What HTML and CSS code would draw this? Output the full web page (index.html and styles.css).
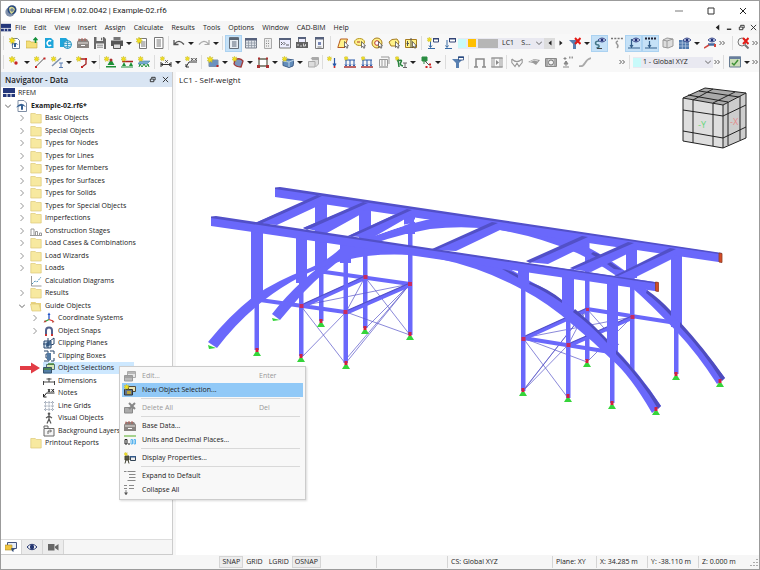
FILE: index.html
```html
<!DOCTYPE html>
<html lang="en">
<head>
    <meta charset="UTF-8">
    <meta name="viewport" content="width=device-width, initial-scale=1.0">
    <title>Dlubal RFEM | 6.02.0042 | Example-02.rf6</title>
    <link rel="stylesheet" href="styles.css">
</head>
<body>

<!-- Icon library -->
<svg class="icon-library" aria-hidden="true">
    <symbol id="star" viewBox="0 0 12 12"><path d="M3 0l.8 2L6 1.2 4.8 3 6.500 3.800 4.700 4.500 5.200 6.500 3.400 5.300 2 6.800 1.800 4.800 0 4.800 1.300 3.400 0 1.600 2.200 2z" fill="#f2df1d" stroke="#b9ad1c" stroke-width=".4"/></symbol>
    <symbol id="doc" viewBox="0 0 12 12"><path d="M1.500 .500h8.500v11h-8.500z" fill="#fff" stroke="#777"/><path d="M3.500 3h4.500M3.500 5h4.500M3.500 7h4.500M3.500 9h4.500" stroke="#777"/></symbol>
    <symbol id="new-doc" viewBox="0 0 12 12"><path d="M3.500 1.500h7v10h-7z" fill="#fff" stroke="#777"/><path d="M5 5h4.500M5 7h4.500M5 9h4.500" stroke="#777"/><use href="#star"/></symbol>
    <symbol id="new-model" viewBox="0 0 12 12"><path d="M3.500 1.500h5l2 2v8h-7z" fill="#fff" stroke="#6b7d95"/><path d="M2 8.500q3.500-5 7.500-.5l-2.500-1v3H5V7z" fill="#2f5d94"/><use href="#star"/></symbol>
    <symbol id="model" viewBox="0 0 12 12"><path d="M2 .500h6l2.500 2.500v8.500h-8.500z" fill="#fff" stroke="#7f8ea4"/><path d="M0 7.500q5-7 10-.5l-3-1.300v4h-2v-4z" fill="#345f91"/></symbol>
    <symbol id="open" viewBox="0 0 12 12"><path d="M0 4h4l1 1h6v6H0z" fill="#f4df7a" stroke="#c5a83c" stroke-width=".6"/><path d="M9.500 6V1.500M7.500 3.200l2-2.200 2 2.200" stroke="#12903a" stroke-width="1.500" fill="none"/></symbol>
    <symbol id="center" viewBox="0 0 12 12"><path d="M2 1h6l2.500 2.500v7.500H2z" fill="#1ea5da"/><path d="M8.200 4.200a2.500 2.500 0 1 0 0 4" fill="none" stroke="#fff" stroke-width="1.500"/></symbol>
    <symbol id="cloud" viewBox="0 0 12 12"><path d="M0 1h6l2 2v7H0z" fill="#1ea5da"/><circle cx="7.500" cy="7.500" r="4" fill="#d9f2fb" stroke="#188dbd"/><path d="M3.500 7.500h8M7.500 3.500v8M5 5q2.500 1.500 5 0M5 10q2.500-1.500 5 0" stroke="#188dbd" stroke-width=".7" fill="none"/></symbol>
    <symbol id="base" viewBox="0 0 12 12"><path d="M0 4.500h12V11H0zM2 2h8l2 3H0z" fill="#8a8582"/><path d="M1 6h10" stroke="#e8e3df"/><path d="M2 1.500v2.500M5 1v3M8 1v3" stroke="#b35d55" stroke-width="1"/><path d="M4 8.500h4" stroke="#fff"/></symbol>
    <symbol id="save" viewBox="0 0 12 12"><path d="M0 0h10l2 2v10H0z" fill="#696969"/><path d="M2.500 0h6.500v4h-6.500zM2 6.500h8V12H2z" fill="#f4f4f4"/><path d="M3 8.200h6M3 10.200h6" stroke="#888"/><path d="M7 .700h1.200v2.500H7z" fill="#696969"/></symbol>
    <symbol id="print" viewBox="0 0 12 12"><path d="M2.500 0h7v3h-7z" fill="#777"/><path d="M0 3.500h12v5.500H0z" fill="#555"/><path d="M2.500 7h7v4.500h-7z" fill="#ddd" stroke="#555"/></symbol>
    <symbol id="undo" viewBox="0 0 12 12"><path d="M1 3v4.500h4.500M1.500 7q4.500-5.500 9.500.5" fill="none" stroke="#555" stroke-width="1.300"/></symbol>
    <symbol id="redo" viewBox="0 0 12 12"><path d="M11 3v4.500H6.500M10.500 7Q6 1.500 1 7.500" fill="none" stroke="#aaa" stroke-width="1.200"/></symbol>
    <symbol id="navigator" viewBox="0 0 12 12"><path d="M1.500 .500h9v11h-9z" fill="#e8edf3" stroke="#666f7b"/><path d="M1 1h10v2H1z" fill="#5b6675"/><path d="M4 5h4.500M4 7h4.500M4 9h4.500" stroke="#586577"/></symbol>
    <symbol id="table" viewBox="0 0 12 12"><path d="M.5 1.500h11v9.500H.5z" fill="#dfe3e9" stroke="#777e8b"/><path d="M0 1h12v2.500H0z" fill="#56617c"/><path d="M0 6h12M0 8.500h12M3.500 3v8M6.500 3v8M9.500 3v8" stroke="#8b93a0" stroke-width=".7"/></symbol>
    <symbol id="list-grey" viewBox="0 0 12 12"><path d="M2.500 1.500h7v10h-7z" fill="#eee" stroke="#aaa"/><path d="M4 4h4M4 6.500h4M4 9h4" stroke="#888" stroke-dasharray="1 1"/></symbol>
    <symbol id="console" viewBox="0 0 12 12"><path d="M.5 1.500h11v9.500H.5z" fill="#eef" stroke="#777"/><path d="M0 1h12v2H0z" fill="#56617c"/><path d="M2 5l1.500 1.500L2 8M4.500 5l1.500 1.500L4.500 8M7 8h3" stroke="#333" fill="none" stroke-width=".8"/></symbol>
    <symbol id="script" viewBox="0 0 12 12"><path d="M2.500 .500h7v5h-7z" fill="#eef" stroke="#777"/><path d="M2 0h8v2H2z" fill="#56617c"/><path d="M0 5h12v6H0z" fill="#626262"/><path d="M1.500 7l1 1-1 1M4 9h2M7.500 6.500v2.800M7.500 9h2v-2" stroke="#fff" fill="none" stroke-width=".7"/></symbol>
    <symbol id="panel" viewBox="0 0 12 12"><path d="M2.500 .500h8v11h-8z" fill="#f4f6fa" stroke="#777"/><path d="M2 0h9v2.500H2z" fill="#56617c"/><path d="M5 5h3v3H5z" fill="#7a89b5"/><path d="M4.500 10h4" stroke="#777"/></symbol>
    <symbol id="cursor" viewBox="0 0 12 12"><path d="M7.500 4.500v6l1.300-1.200 1 2 1-.5-.9-1.900h1.600z" fill="#fff" stroke="#222" stroke-width=".6"/></symbol>
    <symbol id="sel-rhomb" viewBox="0 0 12 12"><path d="M3.500 2h7l-3 8.500H.8z" fill="#fff28a" stroke="#b65a20"/><use href="#cursor"/></symbol>
    <symbol id="sel-ellipse" viewBox="0 0 12 12"><ellipse cx="5.500" cy="5" rx="5" ry="3.500" fill="#fff28a" stroke="#b69520"/><path d="M3 5h3" stroke="#a33"/><use href="#cursor"/></symbol>
    <symbol id="sel-ring" viewBox="0 0 12 12"><circle cx="6" cy="6" r="5" fill="#fff28a" stroke="#a67c20"/><circle cx="6" cy="6" r="2.300" fill="#fff" stroke="#b33"/><use href="#cursor"/></symbol>
    <symbol id="sel-poly" viewBox="0 0 12 12"><path d="M1 5l3-2.500 5-.5 2 3-1.500 4H3z" fill="#fff28a" stroke="#a67c20"/><use href="#cursor"/></symbol>
    <symbol id="sel-split" viewBox="0 0 12 12"><path d="M.5 2.500h11v8H.5z" fill="#fff28a" stroke="#a67c20"/><path d="M6 1v10M2.500 4v5M1.500 6.500h2.500" stroke="#555"/><use href="#cursor"/></symbol>
    <symbol id="load-new" viewBox="0 0 12 12"><path d="M1 11.500h7M3.500 4v6M2 8.500l1.500 2 1.500-2" stroke="#376aa5" fill="none"/><path d="M6.500 1.500h5v3.500h-5z" fill="#fff" stroke="#347"/><path d="M6 1h6v1.500H6z" fill="#347"/><use href="#star" width="9" height="9"/></symbol>
    <symbol id="load-case" viewBox="0 0 12 12"><path d="M1 11.500h7M3 3v7M1.500 8.500l1.500 2 1.500-2" stroke="#376aa5" fill="none"/><path d="M5.500 1.500h6v3.500h-6z" fill="#fff" stroke="#347"/><path d="M5 1h7v1.500H5z" fill="#347"/></symbol>
    <symbol id="filter" viewBox="0 0 12 12"><path d="M0 3h11L7 7v5H4V7z" fill="#5880b1"/></symbol>
    <symbol id="red-x" viewBox="0 0 12 12"><path d="M6 1l5.500 6M11.500 1L6 7" stroke="#e31b16" stroke-width="2"/></symbol>
    <symbol id="filter-x" viewBox="0 0 12 12"><use href="#filter"/><use href="#red-x"/></symbol>
    <symbol id="filter-win" viewBox="0 0 12 12"><use href="#filter"/><path d="M6.500 1h5v3h-5z" fill="#fff" stroke="#294a80" stroke-width=".8"/><path d="M6 .500h6V2H6z" fill="#294a80"/></symbol>
    <symbol id="eye" viewBox="0 0 12 12"><path d="M4 3q4-4 8 0-4 4-8 0z" fill="#dfe8fb" stroke="#1d2d75" stroke-width=".8"/><circle cx="8" cy="3" r="1.500" fill="#1d2d75"/></symbol>
    <symbol id="support-eye" viewBox="0 0 12 12"><path d="M5.500 4q-4 0-4 2t3 2q2 2-2 3" stroke="#478" fill="none" stroke-width="1.500"/><path d="M3 11.500h5" stroke="#444"/><use href="#eye"/></symbol>
    <symbol id="values-grey" viewBox="0 0 12 12"><path d="M0 1.500h12" stroke="#777" stroke-width="1.500" stroke-dasharray="2 1.300"/><path d="M7 4q-3 1-1 3t0 4" stroke="#999" fill="none" stroke-width="1.500"/></symbol>
    <symbol id="load-eye" viewBox="0 0 12 12"><path d="M0 11h12M3.500 2v8M2 8l1.500 2L5 8" stroke="#35608b" fill="none" stroke-width="1.200"/><use href="#eye"/></symbol>
    <symbol id="load-values" viewBox="0 0 12 12"><path d="M0 11h12M4.500 4v6M3 8l1.500 2L6 8" stroke="#35608b" fill="none" stroke-width="1.200"/><path d="M0 1.500h12" stroke="#223" stroke-width="2" stroke-dasharray="2 1"/></symbol>
    <symbol id="cube-grey" viewBox="0 0 12 12"><path d="M1 3l4-2 6 1v7l-5 2-5-1z" fill="#ddd" stroke="#999"/><path d="M5 4v7M1 3l4 1 6-2" fill="none" stroke="#999"/></symbol>
    <symbol id="grid-eye" viewBox="0 0 12 12"><path d="M0 3h10v9H0z" fill="#4e79ae"/><path d="M0 6h10M0 9h10M3.300 3v9M6.600 3v9" stroke="#b9cce4" stroke-width=".7"/><use href="#eye"/></symbol>
    <symbol id="beam-eye" viewBox="0 0 12 12"><path d="M4 7.500h7" stroke="#456ca4" stroke-width="2.500"/><path d="M0 11l5-3" stroke="#d2453d" stroke-width="1.500"/><path d="M10 7h2v3h-2z" fill="#d2453d"/><use href="#eye"/></symbol>
    <symbol id="find-x" viewBox="0 0 12 12"><circle cx="5" cy="5" r="4" fill="#f5f5f5" stroke="#777"/><path d="M8 8l3.500 3.500" stroke="#777" stroke-width="2"/><use href="#red-x"/></symbol>
    <symbol id="node" viewBox="0 0 12 12"><use href="#star"/><circle cx="7" cy="7" r="1.700" fill="#c82424"/></symbol>
    <symbol id="line" viewBox="0 0 12 12"><path d="M2 10.500L10.500 2" stroke="#555"/><path d="M1 10h2v2H1zM9.500 1.500h2v2h-2z" fill="#c82424"/><use href="#star" width="10" height="10"/></symbol>
    <symbol id="member" viewBox="0 0 12 12"><path d="M1 10L10 2" stroke="#7e92ae" stroke-width="1.500"/><path d="M8 7h4M10 7v4M8 11.500h4" stroke="#5a7eb4"/><use href="#star" width="10" height="10"/></symbol>
    <symbol id="polyline" viewBox="0 0 12 12"><path d="M3 3h7v5l-4 3" fill="none" stroke="#a02020" stroke-width="1.300"/><path d="M5 10h2v2H5zM9 2h2v2H9z" fill="#c82424"/><use href="#star" width="10" height="10"/></symbol>
    <symbol id="nodal-support" viewBox="0 0 12 12"><path d="M7 3l3.500 6h-7zM2 10h10v1.500H2z" fill="#1e9138"/><circle cx="7" cy="4" r="1.500" fill="#a33"/><use href="#star" width="10" height="10"/></symbol>
    <symbol id="line-support" viewBox="0 0 12 12"><path d="M1 5.500h11" stroke="#a22" stroke-width="1.500"/><path d="M3 6l2 4H1zM10 6l2 4H8z" fill="#1e9138"/><path d="M0 11h12" stroke="#1e9138"/><use href="#star" width="10" height="10"/></symbol>
    <symbol id="surface-support" viewBox="0 0 12 12"><path d="M2 5h10L9 8H0z" fill="#77acd0" stroke="#4485a8" stroke-width=".6"/><path d="M1 11l1-3 2 3 2-3 2 3 2-3 1 3" fill="none" stroke="#1e9138"/><use href="#star" width="10" height="10"/></symbol>
    <symbol id="dimension" viewBox="0 0 12 12"><path d="M1 6v5M11 6v5M1 8.500h10M3 7.500L1 8.500l2 1M9 7.500l2 1-2 1" stroke="#333" fill="none"/><path d="M5 4l3 3M8 4L5 7" stroke="#333" stroke-width=".7"/><use href="#star" width="9" height="9"/></symbol>
    <symbol id="note" viewBox="0 0 12 12"><path d="M1 11l3-5h8M1 11v-3M1 11h3" stroke="#333" fill="none"/><path d="M6 2l2.500 3M8.500 2L6 5M9.500 2L12 5M12 2L9.500 5" stroke="#333" stroke-width=".8"/><use href="#star" width="9" height="9"/></symbol>
    <symbol id="surface" viewBox="0 0 12 12"><path d="M2 4h9v6.500H2z" fill="#6b91c0" stroke="#7b8fae"/><path d="M9.500 9h2v2h-2z" fill="#b22"/><use href="#star"/></symbol>
    <symbol id="surface-round" viewBox="0 0 12 12"><path d="M3 4q5-3 8 1l-2 6q-5 0-7-3z" fill="#7b93bc" stroke="#a03939" stroke-width="1.300"/><use href="#star" width="10" height="10"/></symbol>
    <symbol id="opening" viewBox="0 0 12 12"><path d="M2 3h8v7H2z" fill="#fff" stroke="#665" stroke-width="1.300"/><path d="M0 9h3v3H0zM9 1.500h2v2H9zM9 9h3v3H9zM1 1.500h2v2H1z" fill="#a33"/></symbol>
    <symbol id="solid" viewBox="0 0 12 12"><path d="M1 5l4-2 7 1-1 6-4 1.500-6-2z" fill="#628dbb" stroke="#405f89"/><path d="M1 5l6 1 5-2M7 6v5" fill="none" stroke="#bed4e7"/><use href="#star" width="10" height="10"/></symbol>
    <symbol id="solid-grey" viewBox="0 0 12 12"><path d="M1.500 5.500h6.500v5.500H1.500zM4 3l1-1.500h6.500v6.500l-3 3" fill="#ddd" stroke="#aaa"/><path d="M5 2h7v2H5z" fill="#aaa"/></symbol>
    <symbol id="load-node" viewBox="0 0 12 12"><path d="M7.500 2v7M6 7.500L7.500 10 9 7.500" stroke="#2958a8" stroke-width="1.200" fill="none"/><circle cx="7.500" cy="11" r="1" fill="#c22"/><use href="#star" width="9" height="9"/></symbol>
    <symbol id="load-line" viewBox="0 0 12 12"><path d="M1 4h10M2 4v6M6 4v6M10 4v6M1 8.500l1 1.500 1-1.500M5 8.500L6 10l1-1.500M9 8.500l1 1.500 1-1.500" stroke="#2958a8" fill="none"/><path d="M0 11h12" stroke="#a33" stroke-width="1.500"/><use href="#star" width="8" height="8"/></symbol>
    <symbol id="load-grey" viewBox="0 0 12 12"><path d="M1.500 10V3.500h8V10M4 3v7M7 3v7M3 1h8v7" stroke="#999" fill="none"/><path d="M1 11h9" stroke="#777"/></symbol>
    <symbol id="spring" viewBox="0 0 12 12"><path d="M2 5q6-2 4 1t2 4M3 3l1 8" stroke="#27823d" fill="none" stroke-width="1.500"/><path d="M8 7h4M10 7v4M8 11.500h4" stroke="#666"/><use href="#star" width="8" height="8"/></symbol>
    <symbol id="result-pts" viewBox="0 0 12 12"><path d="M2 1h5v4H2zM4 5v3" fill="#2b8d42" stroke="#2b8d42"/><path d="M5 5l4 4" stroke="#555"/><path d="M9 7.500h2v2H9zM5.500 10h2v2h-2zM9.500 10.500h2v1.500h-2z" fill="#c22"/></symbol>
    <symbol id="frame-grey" viewBox="0 0 12 12"><path d="M2 11V3h8v8M0 11h4M8 11h4" fill="none" stroke="#888" stroke-width="1.500"/></symbol>
    <symbol id="frame-load" viewBox="0 0 12 12"><path d="M1 2h10v9H1zM0 2h12M0 11h12M3 2v9M9 2v9" fill="none" stroke="#999"/><path d="M5 4l3 2.500L5 9z" fill="#888"/></symbol>
    <symbol id="deform" viewBox="0 0 12 12"><path d="M.8 3v3.500L4 10.500 6 7l2 3.500 3.200-4V3M.8 3q5 5 10.400 0" fill="none" stroke="#999" stroke-width="1.100"/></symbol>
    <symbol id="contour" viewBox="0 0 12 12"><path d="M0 6l6-3 6 1-4 5-3-2z" fill="#999"/><path d="M2 6l4-2 4 1" stroke="#ddd" fill="none"/></symbol>
    <symbol id="section" viewBox="0 0 12 12"><path d="M.5 2.500h11v8H.5z" fill="#ccc" stroke="#888"/><circle cx="6" cy="6.500" r="2.500" fill="#f5f5f5" stroke="#777"/><path d="M2 3v7M10 3v7" stroke="#888"/></symbol>
    <symbol id="reaction" viewBox="0 0 12 12"><path d="M4 10V5M2 8l2-3 2 3zM1 11h6M3 1v3M1.500 2.500h3" stroke="#888" fill="#888"/><path d="M7 1.500h5" stroke="#999" stroke-width="2" stroke-dasharray="1.500 1"/></symbol>
    <symbol id="diagonal" viewBox="0 0 12 12"><path d="M0 10q4 1 6-3t6-5" fill="none" stroke="#aaa" stroke-width="1.800"/></symbol>
    <symbol id="plugin" viewBox="0 0 12 12"><path d="M.5 1h11v10H.5z" fill="#ccdeba" stroke="#667b91"/><path d="M0 .500h12V3H0z" fill="#687e9d"/><path d="M3 7l2 2 4-5" fill="none" stroke="#3e9136" stroke-width="1.500"/></symbol>

    <symbol id="app" viewBox="0 0 12 12"><circle cx="5" cy="7" r="4.700" fill="#8192ad"/><circle cx="7" cy="4.800" r="4.500" fill="#28487d"/><path d="M4 3q3-3 6 1-1 4-4 5-2-3-2-6z" fill="#d9d990"/><path d="M5 5h4M7 3v4" stroke="#526a94"/></symbol>
    <symbol id="rfem" viewBox="0 0 12 12"><path d="M0 1h12v9H0z" fill="#24377b"/><path d="M0 6.500h12M4 6.500V10M8 6.500V10" stroke="#fff" stroke-width=".9"/></symbol>
    <symbol id="folder" viewBox="0 0 12 12"><path d="M.8 1.500h4.500l1 1H11.200v8.500H.8z" fill="#f7e9a0" stroke="#dcc879" stroke-width=".7"/></symbol>
    <symbol id="folder-open" viewBox="0 0 12 12"><path d="M.8 2h4.500l1 1H11v8H2z" fill="#e8d27f"/><path d="M.5 4h8.500l2 7H2z" fill="#f7e9a0" stroke="#dcc879" stroke-width=".7"/></symbol>
    <symbol id="stages" viewBox="0 0 12 12"><path d="M1 10.500V4h3v6.500M5.500 10.500V6.500h2v4M9.500 10.500V8h2v2.500M0 10.500h12" fill="none" stroke="#999"/></symbol>
    <symbol id="chart" viewBox="0 0 12 12"><path d="M1.500 1v10h10" fill="none" stroke="#999"/><path d="M2 9l3-3 2 1 4-5" fill="none" stroke="#4b8fb5" stroke-dasharray="2 1"/></symbol>
    <symbol id="axes" viewBox="0 0 12 12"><path d="M6 7V2" stroke="#2454c5" stroke-width="1.300"/><path d="M4.500 3L6 .500 7.500 3z" fill="#2454c5"/><path d="M6 7.500L2 9.500" stroke="#299b35" stroke-width="1.300"/><path d="M6 7.500l4 1.500" stroke="#d33" stroke-width="1.300"/><path d="M.5 10.500L2 8l1.500 2zM9.500 8l2 2-2.500.8z" fill="#b43"/></symbol>
    <symbol id="magnet" viewBox="0 0 12 12"><path d="M3 10V5.500a3 3 0 0 1 6 0V10" fill="none" stroke="#52618d" stroke-width="2"/><path d="M2 9h2v2H2zM8 9h2v2H8z" fill="#c33"/></symbol>
    <symbol id="clip-plane" viewBox="0 0 12 12"><path d="M1 4h7v7H1z" fill="#cfe0ee" stroke="#26446b"/><path d="M3 6l5-3v5l-5 2z" fill="#456990"/><path d="M5 1v10M7 4l4-3M8 8l3-1M11 1v6M0 7h3" stroke="#26446b" fill="none"/></symbol>
    <symbol id="clip-box" viewBox="0 0 12 12"><path d="M1 1h4v3H3v4h3v3H1M7 1h4v3M8 11h3V8" fill="none" stroke="#26446b"/><path d="M4 3h4v7H4z" fill="#537aa3"/></symbol>
    <symbol id="selection" viewBox="0 0 12 12"><path d="M3.500 2.500h8v5h-8z" fill="#d7e8b5" stroke="#53707b"/><path d="M.5 5.500h8V11h-8z" fill="#517da5" stroke="#395269"/><path d="M5 2h6M1 7h7" stroke="#4c8b3a" stroke-width="1.500"/></symbol>
    <symbol id="selection-grey" viewBox="0 0 12 12"><path d="M3.500 1.500h8v6h-8z" fill="#e6e6e6" stroke="#aaa"/><path d="M.5 5.500h8V11h-8z" fill="#bbb" stroke="#999"/><path d="M4 3h7M1 7h7" stroke="#888"/></symbol>
    <symbol id="selection-new" viewBox="0 0 12 12"><path d="M4.500 2.500h7v5h-7z" fill="#e7e3b5" stroke="#534b3b"/><path d="M.5 5.500h8V11h-8z" fill="#63728a" stroke="#333"/><path d="M3 7h4v3H3z" fill="#b9a43b"/><use href="#star" width="10" height="10"/></symbol>
    <symbol id="selection-del" viewBox="0 0 12 12"><path d="M.5 5.500h8V11h-8z" fill="#aaa" stroke="#888"/><path d="M5 1l6 6M11 1L5 7" stroke="#888" stroke-width="2"/></symbol>
    <symbol id="dims" viewBox="0 0 12 12"><path d="M.5 6v4M6 3v4M11.500 6v4M0 7h12M3.500 4h5" stroke="#444" fill="none"/></symbol>
    <symbol id="notes" viewBox="0 0 12 12"><path d="M.5 10l3-4h8M.5 10V7M.5 10h3" stroke="#222" fill="none"/><path d="M5 2l2 3M7 2L5 5M8.500 2l2.500 3M11 2L8.500 5" stroke="#222"/></symbol>
    <symbol id="line-grid" viewBox="0 0 12 12"><path d="M2.500 1v10M6 1v10M9.500 1v10M1 2.500h10M1 6h10M1 9.500h10" stroke="#8f9aab" stroke-dasharray="1.500 .700" stroke-width=".8"/></symbol>
    <symbol id="person" viewBox="0 0 12 12"><circle cx="6" cy="1.800" r="1.300" fill="#555"/><path d="M6 3v4M6 4L3 6M6 4l3 2M6 7l-2 4.500M6 7l2 4.500" stroke="#555" stroke-width="1.200"/></symbol>
    <symbol id="layers" viewBox="0 0 12 12"><path d="M1 3.500h10V11H1zM1 3V1h4v2" fill="#f5f5f5" stroke="#666"/><path d="M5 9V6h3M7 4.500L8.500 6 7 7.500" fill="none" stroke="#666"/></symbol>
    <symbol id="units" viewBox="0 0 12 12"><path d="M0 1h12v2H0z" fill="#a5d28e"/><path d="M1 5.500h2V10H1zM5 9v2" fill="none" stroke="#222"/><path d="M7 5.500h1.500V10H7zM10 5.500h1.500V10H10z" fill="none" stroke="#59b4ee"/></symbol>
    <symbol id="display" viewBox="0 0 12 12"><path d="M1 4h4v4H1zM2 8l-1 3.500M4 8l1 3.500" fill="#554" stroke="#443"/><path d="M6.500 4.500h5v4h-5z" fill="#eee" stroke="#345"/><path d="M6 4h6v1.500H6z" fill="#345b8c"/><use href="#star" width="7" height="7"/></symbol>
    <symbol id="expand" viewBox="0 0 12 12"><path d="M0 1.500h2.500M3.500 1.500h8M5 4.500h6.500M5 7.500h6.500M3.500 10.500h8" stroke="#888"/></symbol>
    <symbol id="collapse" viewBox="0 0 12 12"><path d="M0 1.500h3M5 1.500h5M0 4.500h3M5 4.500h5M2 6v5" stroke="#888"/><path d="M0 8.500h4L2 11z" fill="#555"/></symbol>
    <symbol id="data-tab" viewBox="0 0 12 12"><path d="M2.500 1.500h9v6h-9z" fill="#e6edf8" stroke="#44547e"/><path d="M0 4h7v5H0z" fill="#f0c43e" stroke="#a9892b" stroke-width=".6"/><path d="M6 7l4 1-1.500 1v2L7 10z" fill="#35507e"/></symbol>
    <symbol id="eye-tab" viewBox="0 0 12 12"><path d="M1 6q5-5.500 10 0-5 5.500-10 0z" fill="#fff" stroke="#24356f"/><circle cx="6" cy="6" r="2.200" fill="#24356f"/></symbol>
    <symbol id="camera" viewBox="0 0 12 12"><path d="M1 3h6.500v6.500H1zM8 5.500L11.500 3v6.500L8 7z" fill="#666"/></symbol>

    <symbol id="down" viewBox="0 0 6 6"><path d="M0 2h6L3 5z" fill="#222"/></symbol>
    <symbol id="more" viewBox="0 0 6 6"><path d="M.5 1l2 2-2 2M3.500 1l2 2-2 2" fill="none" stroke="#333" stroke-width=".8"/></symbol>
    <symbol id="chevron-down" viewBox="0 0 6 6"><path d="M0 1.500l3 3 3-3" fill="none" stroke="#555" stroke-width=".9"/></symbol>
    <symbol id="chevron-right" viewBox="0 0 6 6"><path d="M1.500 0l3 3-3 3" fill="none" stroke="#888" stroke-width=".9"/></symbol>
    <symbol id="minimize" viewBox="0 0 8 8"><path d="M0 4h8" stroke="#555" stroke-width=".8"/></symbol>
    <symbol id="maximize" viewBox="0 0 8 8"><path d="M1 1h6v6H1z" fill="none" stroke="#333"/></symbol>
    <symbol id="restore" viewBox="0 0 8 8"><path d="M1.500 3.500h4v3h-4zM3 3V1.500h4v3H6" fill="none" stroke="#222"/></symbol>
    <symbol id="close" viewBox="0 0 8 8"><path d="M1 1l6 6M7 1L1 7" stroke="#222"/></symbol>
    <symbol id="mdi-min" viewBox="0 0 8 8"><path d="M1 6h5" stroke="#222" stroke-width="1.500"/></symbol>
    <symbol id="tri-left" viewBox="0 0 6 6"><path d="M4.500 .500v5L1.500 3z" fill="#222"/></symbol>
    <symbol id="tri-right" viewBox="0 0 6 6"><path d="M1.500 .500v5l3-2.500z" fill="#222"/></symbol>

    <symbol id="support" viewBox="-5 -5 10 10"><path d="M-1.500-4h3v4h-3z" fill="#d1223c"/><path d="M-1.500 0h3L4 4h-8z" fill="#35d43a"/></symbol>
</svg>

<div class="window">
    <header class="title-bar">
        <svg class="icon"><use href="#app"/></svg>
        <h1>Dlubal RFEM | 6.02.0042 | Example-02.rf6</h1>
        <button class="window-btn" aria-label="Minimize"><svg><use href="#minimize"/></svg></button>
        <button class="window-btn" aria-label="Maximize"><svg><use href="#maximize"/></svg></button>
        <button class="window-btn" aria-label="Close"><svg><use href="#close"/></svg></button>
    </header>

    <nav class="menu-bar">
        <svg class="logo"><use href="#rfem"/></svg>
        <button>File</button>
        <button>Edit</button>
        <button>View</button>
        <button>Insert</button>
        <button>Assign</button>
        <button>Calculate</button>
        <button>Results</button>
        <button>Tools</button>
        <button>Options</button>
        <button>Window</button>
        <button>CAD-BIM</button>
        <button>Help</button>
        <span class="spacer"></span>
        <button class="mdi-btn" aria-label="Scroll"><svg><use href="#tri-left"/></svg></button>
        <button class="mdi-btn" aria-label="Minimize document"><svg><use href="#mdi-min"/></svg></button>
        <button class="mdi-btn" aria-label="Restore document"><svg><use href="#restore"/></svg></button>
        <button class="mdi-btn" aria-label="Close document"><svg><use href="#close"/></svg></button>
    </nav>

    <!-- Toolbars -->
    <div class="toolbar">
        <span class="handle"></span>
        <button class="tool" aria-label="New model"><svg><use href="#new-model"/></svg></button>
        <button class="tool" aria-label="Open"><svg><use href="#open"/></svg></button>
        <button class="tool" aria-label="Dlubal Center"><svg><use href="#center"/></svg></button>
        <button class="tool" aria-label="Cloud"><svg><use href="#cloud"/></svg></button>
        <button class="tool" aria-label="Base data"><svg><use href="#base"/></svg></button>
        <button class="tool" aria-label="Save"><svg><use href="#save"/></svg></button>
        <button class="tool" aria-label="Print"><svg><use href="#print"/></svg></button>
        <button class="drop" aria-label="Print menu"><svg><use href="#down"/></svg></button>
        <button class="tool" aria-label="New report"><svg><use href="#new-doc"/></svg></button>
        <button class="tool" aria-label="Report"><svg><use href="#doc"/></svg></button>
        <span class="sep"></span>
        <button class="tool" aria-label="Undo"><svg><use href="#undo"/></svg></button>
        <button class="drop" aria-label="Undo list"><svg><use href="#down"/></svg></button>
        <button class="tool" aria-label="Redo"><svg><use href="#redo"/></svg></button>
        <button class="drop" aria-label="Redo list"><svg><use href="#down"/></svg></button>
        <span class="sep mid"></span>
        <button class="tool active" aria-label="Navigator"><svg><use href="#navigator"/></svg></button>
        <button class="tool" aria-label="Tables"><svg><use href="#table"/></svg></button>
        <button class="tool" aria-label="Control list"><svg><use href="#list-grey"/></svg></button>
        <button class="tool" aria-label="Console"><svg><use href="#console"/></svg></button>
        <button class="tool" aria-label="Script"><svg><use href="#script"/></svg></button>
        <button class="tool" aria-label="Panel"><svg><use href="#panel"/></svg></button>
        <span class="sep wide"></span>
        <button class="tool" aria-label="Select by rhomboid"><svg><use href="#sel-rhomb"/></svg></button>
        <button class="tool" aria-label="Select by ellipse"><svg><use href="#sel-ellipse"/></svg></button>
        <button class="tool" aria-label="Select by annulus"><svg><use href="#sel-ring"/></svg></button>
        <button class="tool" aria-label="Select by polygon"><svg><use href="#sel-poly"/></svg></button>
        <button class="tool" aria-label="Select by line"><svg><use href="#sel-split"/></svg></button>
        <span class="sep mid"></span>
        <button class="tool" aria-label="New load case"><svg><use href="#load-new"/></svg></button>
        <button class="tool" aria-label="Load cases"><svg><use href="#load-case"/></svg></button>
        <div class="combo load-combo">
            <span class="swatch cyan"></span>
            <span class="swatch gold"></span>
            <span class="swatch grey"></span>
            <select aria-label="Load case"><option>LC1 &nbsp;&nbsp; S...</option></select>
            <svg><use href="#chevron-down"/></svg>
        </div>
        <button class="step prev" aria-label="Previous load case"><svg><use href="#tri-left"/></svg></button>
        <button class="step" aria-label="Next load case"><svg><use href="#tri-right"/></svg></button>
        <button class="tool" aria-label="Remove filter"><svg><use href="#filter-x"/></svg></button>
        <button class="drop" aria-label="Filter menu"><svg><use href="#down"/></svg></button>
        <button class="tool active" aria-label="Show supports"><svg><use href="#support-eye"/></svg></button>
        <button class="tool" aria-label="Show support values"><svg><use href="#values-grey"/></svg></button>
        <button class="tool active" aria-label="Show loads"><svg><use href="#load-eye"/></svg></button>
        <button class="tool active" aria-label="Show load values"><svg><use href="#load-values"/></svg></button>
        <button class="tool" aria-label="Show solids"><svg><use href="#cube-grey"/></svg></button>
        <button class="tool" aria-label="Show mesh"><svg><use href="#grid-eye"/></svg></button>
        <button class="drop" aria-label="Mesh menu"><svg><use href="#down"/></svg></button>
        <button class="tool" aria-label="Show members"><svg><use href="#beam-eye"/></svg></button>
        <button class="drop" aria-label="More"><svg><use href="#more"/></svg></button>
        <span class="spacer"></span>
        <span class="sep"></span>
        <button class="tool" aria-label="Cancel search"><svg><use href="#find-x"/></svg></button>
        <button class="drop" aria-label="More"><svg><use href="#more"/></svg></button>
    </div>

    <div class="toolbar">
        <span class="handle"></span>
        <button class="tool" aria-label="New node"><svg><use href="#node"/></svg></button>
        <button class="drop" aria-label="Node types"><svg><use href="#down"/></svg></button>
        <button class="tool" aria-label="New line"><svg><use href="#line"/></svg></button>
        <button class="tool" aria-label="New member"><svg><use href="#member"/></svg></button>
        <button class="drop" aria-label="Member types"><svg><use href="#down"/></svg></button>
        <button class="tool" aria-label="New polyline"><svg><use href="#polyline"/></svg></button>
        <button class="drop" aria-label="Polyline types"><svg><use href="#down"/></svg></button>
        <span class="sep"></span>
        <button class="tool" aria-label="Nodal support"><svg><use href="#nodal-support"/></svg></button>
        <button class="tool" aria-label="Line support"><svg><use href="#line-support"/></svg></button>
        <button class="tool" aria-label="Surface support"><svg><use href="#surface-support"/></svg></button>
        <span class="sep mid"></span>
        <button class="tool" aria-label="New dimension"><svg><use href="#dimension"/></svg></button>
        <button class="drop" aria-label="Dimension types"><svg><use href="#down"/></svg></button>
        <button class="tool" aria-label="New note"><svg><use href="#note"/></svg></button>
        <span class="sep mid"></span>
        <button class="tool" aria-label="New surface"><svg><use href="#surface"/></svg></button>
        <button class="drop" aria-label="Surface types"><svg><use href="#down"/></svg></button>
        <button class="tool" aria-label="New curved surface"><svg><use href="#surface-round"/></svg></button>
        <button class="drop" aria-label="Curved surface types"><svg><use href="#down"/></svg></button>
        <button class="tool" aria-label="New opening"><svg><use href="#opening"/></svg></button>
        <button class="drop" aria-label="Opening types"><svg><use href="#down"/></svg></button>
        <button class="tool" aria-label="New solid"><svg><use href="#solid"/></svg></button>
        <button class="drop" aria-label="Solid types"><svg><use href="#down"/></svg></button>
        <button class="tool" aria-label="Solid sets"><svg><use href="#solid-grey"/></svg></button>
        <span class="sep"></span>
        <button class="tool" aria-label="Nodal load"><svg><use href="#load-node"/></svg></button>
        <button class="tool" aria-label="Member load"><svg><use href="#load-line"/></svg></button>
        <button class="tool" aria-label="Surface load"><svg><use href="#load-line"/></svg></button>
        <button class="tool" aria-label="Solid load"><svg><use href="#load-grey"/></svg></button>
        <button class="tool" aria-label="Imposed deformation"><svg><use href="#spring"/></svg></button>
        <button class="drop" aria-label="Deformation types"><svg><use href="#down"/></svg></button>
        <button class="tool" aria-label="Result points"><svg><use href="#result-pts"/></svg></button>
        <button class="drop" aria-label="Result point types"><svg><use href="#down"/></svg></button>
        <span class="sep wide"></span>
        <button class="tool" aria-label="Filter window"><svg><use href="#filter-win"/></svg></button>
        <span class="sep mid"></span>
        <button class="tool" aria-label="Frame"><svg><use href="#frame-grey"/></svg></button>
        <button class="tool" aria-label="Frame loads"><svg><use href="#frame-load"/></svg></button>
        <span class="sep"></span>
        <button class="tool" aria-label="Deformations"><svg><use href="#deform"/></svg></button>
        <button class="tool" aria-label="Contours"><svg><use href="#contour"/></svg></button>
        <button class="tool" aria-label="Sections"><svg><use href="#section"/></svg></button>
        <button class="tool" aria-label="Reactions"><svg><use href="#reaction"/></svg></button>
        <button class="tool" aria-label="Result beam"><svg><use href="#diagonal"/></svg></button>
        <span class="spacer"></span>
        <button class="drop" aria-label="More"><svg><use href="#more"/></svg></button>
        <span class="sep wide"></span>
        <div class="combo cs-combo">
            <span class="swatch cyan"></span>
            <select aria-label="Coordinate system"><option>1 - Global XYZ</option></select>
            <svg><use href="#chevron-down"/></svg>
        </div>
        <button class="drop" aria-label="More"><svg><use href="#more"/></svg></button>
        <span class="sep mid"></span>
        <button class="tool" aria-label="Plug-ins"><svg><use href="#plugin"/></svg></button>
        <button class="drop" aria-label="Plug-in list"><svg><use href="#down"/></svg></button>
        <button class="drop" aria-label="More"><svg><use href="#more"/></svg></button>
    </div>

    <main class="workspace">
        <aside class="navigator">
            <div class="navigator-header">
                <h2>Navigator - Data</h2>
                <button class="mdi-btn" aria-label="Float"><svg><use href="#restore"/></svg></button>
                <button class="mdi-btn" aria-label="Close navigator"><svg><use href="#close"/></svg></button>
            </div>

            <ul class="tree">
                <li><svg class="icon"><use href="#rfem"/></svg>RFEM</li>
                <li class="root"><svg class="arrow"><use href="#chevron-down"/></svg><svg class="icon"><use href="#model"/></svg>Example-02.rf6*</li>
                <li class="level-2"><svg class="arrow"><use href="#chevron-right"/></svg><svg class="icon"><use href="#folder"/></svg>Basic Objects</li>
                <li class="level-2"><svg class="arrow"><use href="#chevron-right"/></svg><svg class="icon"><use href="#folder"/></svg>Special Objects</li>
                <li class="level-2"><svg class="arrow"><use href="#chevron-right"/></svg><svg class="icon"><use href="#folder"/></svg>Types for Nodes</li>
                <li class="level-2"><svg class="arrow"><use href="#chevron-right"/></svg><svg class="icon"><use href="#folder"/></svg>Types for Lines</li>
                <li class="level-2"><svg class="arrow"><use href="#chevron-right"/></svg><svg class="icon"><use href="#folder"/></svg>Types for Members</li>
                <li class="level-2"><svg class="arrow"><use href="#chevron-right"/></svg><svg class="icon"><use href="#folder"/></svg>Types for Surfaces</li>
                <li class="level-2"><svg class="arrow"><use href="#chevron-right"/></svg><svg class="icon"><use href="#folder"/></svg>Types for Solids</li>
                <li class="level-2"><svg class="arrow"><use href="#chevron-right"/></svg><svg class="icon"><use href="#folder"/></svg>Types for Special Objects</li>
                <li class="level-2"><svg class="arrow"><use href="#chevron-right"/></svg><svg class="icon"><use href="#folder"/></svg>Imperfections</li>
                <li class="level-2"><svg class="arrow"><use href="#chevron-right"/></svg><svg class="icon"><use href="#stages"/></svg>Construction Stages</li>
                <li class="level-2"><svg class="arrow"><use href="#chevron-right"/></svg><svg class="icon"><use href="#folder"/></svg>Load Cases &amp; Combinations</li>
                <li class="level-2"><svg class="arrow"><use href="#chevron-right"/></svg><svg class="icon"><use href="#folder"/></svg>Load Wizards</li>
                <li class="level-2"><svg class="arrow"><use href="#chevron-right"/></svg><svg class="icon"><use href="#folder"/></svg>Loads</li>
                <li class="level-2"><svg class="arrow"></svg><svg class="icon"><use href="#chart"/></svg>Calculation Diagrams</li>
                <li class="level-2"><svg class="arrow"><use href="#chevron-right"/></svg><svg class="icon"><use href="#folder"/></svg>Results</li>
                <li class="level-2"><svg class="arrow"><use href="#chevron-down"/></svg><svg class="icon"><use href="#folder-open"/></svg>Guide Objects</li>
                <li class="level-3"><svg class="arrow"><use href="#chevron-right"/></svg><svg class="icon"><use href="#axes"/></svg>Coordinate Systems</li>
                <li class="level-3"><svg class="arrow"><use href="#chevron-right"/></svg><svg class="icon"><use href="#magnet"/></svg>Object Snaps</li>
                <li class="level-3"><svg class="arrow"></svg><svg class="icon"><use href="#clip-plane"/></svg>Clipping Planes</li>
                <li class="level-3"><svg class="arrow"></svg><svg class="icon"><use href="#clip-box"/></svg>Clipping Boxes</li>
                <li class="level-3">
                    <svg class="pointer" viewBox="0 0 20 12"><path d="M0 4h11V.500L20 6l-9 5.500V8H0z" fill="#e23c45"/></svg>
                    <svg class="arrow"></svg><span class="selected"><svg class="icon"><use href="#selection"/></svg>Object Selections</span>
                </li>
                <li class="level-3"><svg class="arrow"></svg><svg class="icon"><use href="#dims"/></svg>Dimensions</li>
                <li class="level-3"><svg class="arrow"></svg><svg class="icon"><use href="#notes"/></svg>Notes</li>
                <li class="level-3"><svg class="arrow"></svg><svg class="icon"><use href="#line-grid"/></svg>Line Grids</li>
                <li class="level-3"><svg class="arrow"></svg><svg class="icon"><use href="#person"/></svg>Visual Objects</li>
                <li class="level-3"><svg class="arrow"></svg><svg class="icon"><use href="#layers"/></svg>Background Layers</li>
                <li class="level-2"><svg class="arrow"></svg><svg class="icon"><use href="#folder"/></svg>Printout Reports</li>
            </ul>

            <div class="navigator-tabs">
                <button class="tab current" aria-label="Data"><svg class="icon"><use href="#data-tab"/></svg></button>
                <button class="tab" aria-label="Display"><svg class="icon"><use href="#eye-tab"/></svg></button>
                <button class="tab" aria-label="Views"><svg class="icon"><use href="#camera"/></svg></button>
            </div>
        </aside>

        <section class="viewport">
            <p class="load-label">LC1 - Self-weight</p>

            <!-- Bridge model -->
            <svg class="model" viewBox="176 72 583 483">
                <!-- rear beam, posts and arch -->
                <g fill="#6a68fb">
                    <path d="M315 200h12v74h-12zM359 206h12v34h-12zM404 212h11v22h-11zM626 246h11v32h-11zM671 255h11v72h-11z"/>
                    <path d="M319 270h4.500v51H319zM363 232h4.500v96h-4.500zM408 212h4.500v123H408zM585 243h4.500v117H585zM630 270h4.500v105H630zM674 320h4.500v54H674z"/>
                    <path d="M272 314Q303 274 350 246Q390 228 430 219L445 216L560 233L593 250Q625 268 647 290L670 312Q700 344 725 378L717 384Q697 353 677 332Q650 303 630 286Q605 266 577 253Q540 237 500 230Q465 225 430 229Q385 237 350 253Q325 270 303 293L280 320z"/>
                    <path d="M275 188L722 253.500v9L275 197z"/>
                </g>
                <path d="M275 187.500l5-.5 442 66v1.500L275 189z" fill="#5250c8"/>
                <path d="M593 252Q602 254 610 262L622 270 614 269Q604 261 591 254zM647 290Q660 299 671 311V316Q658 302 646 293zM680 322Q704 348 725 378L722 381Q703 351 680 327z" fill="#4e4cbe"/>
                <path d="M371 236Q390 226 410 223.500Q389 231 371 237zM414 219.500L430 219Q422 220 414 222z" fill="#fff"/>
                <path d="M593 245l13 2v5l-13-2z" fill="#fff"/>

                <!-- cross beams -->
                <g fill="#6a68fb">
                    <path d="M255 223l65-28v10l-43 20zM303 228l60-25v10l-36 20zM348 236l59-27 5 6-40 23zM432 250l63-28 5 8-44 21zM527 262l57-26 5 8-41 20zM570 269l61-27 2 9-42 21zM615 276l59-28v10l-42 21z"/>
                </g>
                <path d="M255 223l62-28 5 1-62 28zM303 228l60-26 5 1-61 27zM348 236l59-27 5 1-60 27zM432 249l60-27 6 1-62 27zM526 261l56-25 6 1-58 26zM570 268l58-26 6 1-60 26zM614 276l56-28 6 1-58 27z" fill="#5250c8"/>

                <!-- bracing -->
                <g stroke="#5755c8" stroke-width=".7" fill="none">
                    <path d="M301 306l44 57M346 312l-45 46M301 306l109-22M346 312l19-35M346 312l64 23M345 364l65-80M347 358l63-74M365 277l45 58M365 329l45-45"/>
                    <path d="M523 338l45 60M568 345l-45 46M523 338l64 24M523 391l64-82M525 388l62-79M523 338l109-21M587 309l32 36M587 362l45-45M568 345l19-36"/>
                </g>
                <g stroke="#6a68fb" stroke-width="4" fill="none">
                    <path d="M260 300l85 12M325 272l85 12M523 338l87 14M587 309l89 14M301 307l64-29M346 313l64-28M523 339l64-29M568 346l64-28"/>
                </g>
                <path d="M301 305l64-29M346 311l64-28M523 337l64-29M568 344l64-28" stroke="#5250c8" stroke-width="1.300"/>

                <!-- front beam, posts and arch -->
                <g fill="#6a68fb">
                    <path d="M251 223h12v78h-12zM296 230h11v53h-11zM340 237h11v26h-11zM518 263h11v24h-11zM562 269h12v45h-12zM607 277h11v77h-11z"/>
                    <path d="M254.500 297h4.500v53h-4.500zM299 275h4.500v81H299zM343.500 253h4.500v110h-4.500zM521 283h4.500v108H521zM566 300h4.500v98H566zM610 345h4.500v58H610z"/>
                    <path d="M208 342Q229 316 253 297Q275 281 310 268Q335 257 348 240L440 254L502 265Q517 272 530 281Q558 295 577 312L607 340Q640 373 661 406L652 413Q630 375 612 360Q594 342 573 325Q548 303 523 290Q483 268 440 259Q405 252 367 256Q325 262 291 282Q248 307 217 348z"/>
                    <path d="M211 217L658 282.500v9L211 226z"/>
                </g>
                <path d="M211 216.500l5-.5 442 66.500v1.500L211 218z" fill="#5250c8"/>
                <path d="M502 269Q510 270 518 275V278zM530 282Q549 289 562 300V303Q545 291 529 284zM575 309Q592 323 607 339V343Q591 325 573 312zM616 350Q641 376 661 406L658 409Q642 381 616 354z" fill="#4e4cbe"/>

                <!-- beam ends -->
                <path d="M719 253l3 .5v9l-3-.5zM655.500 282l3 .5v9l-3-.5z" fill="#d34b26" stroke="#934022" stroke-width=".8"/>

                <!-- nodes -->
                <g fill="#c92b5f">
                    <path d="M299.500 304h4v4h-4zM343.500 310h4v4h-4zM363.500 275h4v4h-4zM408 282h4v4h-4zM521.500 337h4v4h-4zM566.500 343h4v4h-4zM586 308h3v3h-3zM630.500 315h4v4h-4z"/>
                </g>
                <path d="M208 345l8 3-7 1zM272 318l8 2-7 1z" fill="#35d43a"/>
                <g>
                    <use href="#support" x="252" y="347" width="10" height="10"/>
                    <use href="#support" x="296" y="353" width="10" height="10"/>
                    <use href="#support" x="341" y="360" width="10" height="10"/>
                    <use href="#support" x="316" y="318" width="10" height="10"/>
                    <use href="#support" x="360" y="325" width="10" height="10"/>
                    <use href="#support" x="405" y="331" width="10" height="10"/>
                    <use href="#support" x="518" y="387" width="10" height="10"/>
                    <use href="#support" x="563" y="393" width="10" height="10"/>
                    <use href="#support" x="607" y="400" width="10" height="10"/>
                    <use href="#support" x="582" y="358" width="10" height="10"/>
                    <use href="#support" x="671" y="371" width="10" height="10"/>
                    <use href="#support" x="651" y="406" width="10" height="10"/>
                    <use href="#support" x="715" y="378" width="10" height="10"/>
                </g>
            </svg>

            <!-- View cube -->
            <svg class="view-cube" viewBox="680 85 68 64">
                <path d="M683 97l22-10 41 5-23 12z" fill="#aaa"/>
                <path d="M683 97l40 7v43l-40-7z" fill="#dedede"/>
                <path d="M723 104l23-12v45l-23 10z" fill="#cdcdcd"/>
                <g fill="none" stroke="#222">
                    <path d="M683 97l40 7v43l-40-7zM723 104l23-12v45l-23 10M683 97l22-10 41 5"/>
                    <path d="M693 99v43M713 102v43M683 109l40 6 23-11M683 130l40 7 23-11M728 101v43M740 95v44M693 99l20-11M713 102l22-11M688 94l40 7M699 90l40 6"/>
                </g>
                <text x="698" y="127" fill="#66d67b">-Y</text>
                <text x="730" y="124" fill="#e58a8a">-X</text>
            </svg>
        </section>

        <!-- Context menu of the selected tree item -->
        <div class="context-menu" role="menu">
            <button disabled><svg class="icon"><use href="#selection-grey"/></svg>Edit...<kbd>Enter</kbd></button>
            <button class="hover"><svg class="icon"><use href="#selection-new"/></svg>New Object Selection...</button>
            <hr>
            <button disabled><svg class="icon"><use href="#selection-del"/></svg>Delete All<kbd>Del</kbd></button>
            <hr>
            <button><svg class="icon"><use href="#base"/></svg>Base Data...</button>
            <button><svg class="icon"><use href="#units"/></svg>Units and Decimal Places...</button>
            <hr>
            <button><svg class="icon"><use href="#display"/></svg>Display Properties...</button>
            <hr>
            <button><svg class="icon"><use href="#expand"/></svg>Expand to Default</button>
            <button><svg class="icon"><use href="#collapse"/></svg>Collapse All</button>
        </div>
    </main>

    <footer class="status-bar">
        <span class="spacer"></span>
        <button class="mode on">SNAP</button>
        <button class="mode">GRID</button>
        <button class="mode">LGRID</button>
        <button class="mode on">OSNAP</button>
        <span class="cell gap"></span>
        <span class="cell progress"></span>
        <span class="cell system">CS: Global XYZ</span>
        <span class="cell plane">Plane: XY</span>
        <span class="cell">X: 34.285 m</span>
        <span class="cell">Y: -38.110 m</span>
        <span class="cell">Z: 0.000 m</span>
        <svg class="grip" viewBox="0 0 10 10"><path d="M8 2v1M8 5v1M5 5v1M8 8v1M5 8v1M2 8v1" stroke="#aaa" stroke-width="2"/></svg>
    </footer>
</div>

</body>
</html>
```
FILE: styles.css
```css
* {
    box-sizing: border-box;
}
body {
    margin: 0;
    font-family: "Open Sans", "Noto Sans", sans-serif;
    font-size: 7px;
    line-height: 12px;
    color: #222;
}
h1, h2, p, ul {
    margin: 0;
    padding: 0;
}
button, select {
    font: inherit;
    color: inherit;
    background: none;
    border: none;
    margin: 0;
    padding: 0;
}
svg {
    display: block;
    flex: none;
}
.icon-library {
    position: absolute;
    width: 0;
    height: 0;
}
.icon {
    width: 12px;
    height: 12px;
}
.spacer {
    flex: 1;
}
.window {
    display: flex;
    flex-direction: column;
    height: 100vh;
    border: 1px solid #9b9b9b;
    background-color: #f6f6f6;
}

/* Title and menus */
.title-bar {
    display: flex;
    align-items: center;
    height: 20px;
    padding-left: 4px;
    background-color: #fff;
}
.title-bar h1 {
    flex: 1;
    margin-left: 3px;
    font-family: Roboto, sans-serif;
    font-size: 8px;
    font-weight: 400;
}
.window-btn {
    display: flex;
    justify-content: center;
    width: 32px;
}
.window-btn svg {
    width: 8px;
    height: 8px;
}
.menu-bar {
    display: flex;
    align-items: center;
    height: 13px;
}
.menu-bar .logo {
    width: 10px;
    height: 12px;
}
.menu-bar button {
    padding: 0 4px;
}
.menu-bar .mdi-btn,
.mdi-btn {
    display: flex;
    justify-content: center;
    width: 13px;
    padding: 0;
}
.menu-bar .mdi-btn {
    width: 12px;
}
.mdi-btn svg {
    width: 7px;
    height: 7px;
}

/* Toolbars */
.toolbar {
    display: flex;
    align-items: center;
    height: 19px;
    padding-bottom: 1px;
    background-color: #f8f8f8;
}
.handle {
    width: 1px;
    height: 14px;
    margin: 0 2px;
    background-color: #ddd;
}
.tool {
    display: flex;
    align-items: center;
    justify-content: center;
    width: 17px;
    height: 17px;
}
.tool svg {
    width: 12px;
    height: 12px;
}
.tool.active {
    background-color: #c5e1f7;
    border: 1px solid #abd2f1;
}
.drop {
    display: flex;
    justify-content: center;
    width: 8px;
}
.drop svg,
.step svg,
.combo svg {
    width: 6px;
    height: 6px;
}
.sep {
    width: 1px;
    height: 14px;
    margin: 0 1px;
    background-color: #ddd;
}
.sep.mid {
    margin: 0 2px;
}
.sep.wide {
    margin: 0 3px;
}
.combo {
    display: flex;
    align-items: center;
    height: 11px;
    background-color: #e9e9f1;
}
.combo select {
    flex: 1;
    min-width: 0;
    appearance: none;
    outline: none;
}
.combo svg {
    margin-right: 2px;
}
.load-combo {
    width: 86px;
}
.cs-combo {
    width: 80px;
}
.swatch {
    height: 9px;
    margin-right: 2px;
}
.swatch.cyan {
    width: 8px;
    background-color: #c8fafa;
}
.swatch.gold {
    width: 8px;
    height: 8px;
    background-color: #ffbf00;
}
.swatch.grey {
    width: 20px;
    margin-right: 4px;
    background-color: #b6b6b6;
}
.step {
    display: flex;
    align-items: center;
    justify-content: center;
    width: 11px;
    height: 11px;
}
.step.prev {
    background-color: #ddd;
}

/* Navigator */
.workspace {
    position: relative;
    display: flex;
    flex: 1;
    min-height: 0;
}
.navigator {
    display: flex;
    flex-direction: column;
    width: 172px;
    border-right: 1px solid #ccc;
    background-color: #fff;
}
.navigator-header {
    display: flex;
    align-items: center;
    height: 15px;
    padding-left: 4px;
    background-color: #d9e5f3;
}
.navigator-header h2 {
    flex: 1;
    font-size: 8px;
    font-weight: 600;
}
.tree {
    flex: 1;
    list-style: none;
}
.tree li {
    position: relative;
    display: flex;
    align-items: center;
    height: 12px;
    padding-left: 2px;
    white-space: nowrap;
}
.tree li:nth-child(even) {
    height: 13px;
}
.tree .root {
    font-weight: 700;
}
.tree .level-2 {
    padding-left: 16px;
}
.tree .level-3 {
    padding-left: 29px;
}
.tree .icon {
    margin-right: 3px;
}
.arrow {
    width: 6px;
    height: 6px;
    margin: 0 5px 0 2px;
}
.selected {
    display: flex;
    align-items: center;
    width: 91px;
    background-color: #cde8ff;
}
.pointer {
    position: absolute;
    left: 19px;
    width: 20px;
    height: 12px;
}
.navigator-tabs {
    display: flex;
    height: 16px;
    background-color: #f6f6f6;
    border-top: 1px solid #ddd;
    border-bottom: 1px solid #ccc;
}
.tab {
    display: flex;
    align-items: center;
    justify-content: center;
    width: 21px;
    background-color: #ececec;
    border-right: 1px solid #d5d5d5;
}
.tab.current {
    background-color: #fff;
}

/* Model view */
.viewport {
    position: relative;
    flex: 1;
    min-width: 0;
    margin-left: 3px;
    background-color: #fff;
}
.load-label {
    position: absolute;
    top: 2px;
    left: 3px;
    font-size: 8px;
}
.model {
    width: 100%;
    height: 100%;
}
.view-cube {
    position: absolute;
    top: 14px;
    right: 11px;
    width: 68px;
    height: 64px;
    font-size: 9px;
}

/* Context menu */
.context-menu {
    position: absolute;
    top: 294px;
    left: 118px;
    width: 187px;
    padding: 2px;
    background-color: #f8f8f8;
    border: 1px solid #ccc;
    box-shadow: 1px 1px 2px rgba(0, 0, 0, 0.15);
}
.context-menu button {
    display: flex;
    align-items: center;
    width: 100%;
    height: 14px;
    padding: 0 2px;
    text-align: left;
}
.context-menu .icon {
    margin-right: 6px;
}
.context-menu button:disabled {
    color: #999;
}
.context-menu .hover {
    background-color: #91c9f7;
}
.context-menu kbd {
    width: 42px;
    margin-left: auto;
    font: inherit;
}
.context-menu hr {
    height: 1px;
    margin: 1px 3px 2px 19px;
    border: none;
    background-color: #d9d9d9;
}

/* Status bar */
.status-bar {
    display: flex;
    align-items: center;
    height: 14px;
    line-height: 10px;
}
.mode {
    padding: 0 2px;
    border: 1px solid transparent;
}
.mode.on {
    background-color: #ececec;
    border-color: #d5d5d5;
}
.cell {
    width: 51px;
    height: 12px;
    padding-left: 3px;
    border-left: 1px solid #d5d5d5;
    line-height: 12px;
    white-space: nowrap;
}
.cell.gap {
    width: 55px;
    border: none;
}
.cell.progress {
    width: 71px;
}
.cell.system {
    width: 105px;
}
.cell.plane {
    width: 44px;
}
.grip {
    width: 10px;
    height: 10px;
}
```
